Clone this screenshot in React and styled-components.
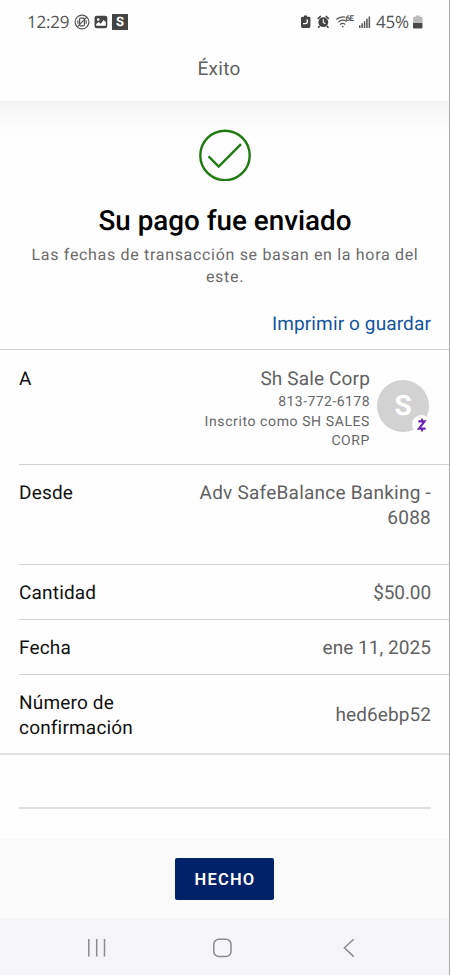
import styled, { createGlobalStyle } from 'styled-components'


const App = () => {
  return (
    <>
      <GlobalStyle />
      <Screen>
        <StatusBar>
          <StatusGroup $gap="4px">
            <StatusText $width="43px">12:29</StatusText>
            <NoVibrateIcon />
            <PictureIcon />
            <AppBadge>S</AppBadge>
          </StatusGroup>
          <StatusGroup $gap="0">
            <StatusIcons />
            <StatusText $width="36px">45%</StatusText>
            <BatteryIcon />
          </StatusGroup>
        </StatusBar>
        <Header>Éxito</Header>

        <Main>
          <Summary>
            <CheckIcon />
            <Title>Su pago fue enviado</Title>
            <Subtitle>Las fechas de transacción se basan en la hora del este.</Subtitle>
          </Summary>
          <PrintLink href="#">Imprimir o guardar</PrintLink>

          <Details>
            <Row $top="17px" $bottom="13.5px">
              <Label>A</Label>
              <Recipient>
                <RecipientText>
                  <Value>Sh Sale Corp</Value>
                  <Small $height="21px" $spacing="0.45px">813-772-6178</Small>
                  <Small $height="19px" $spacing="0.6px">Inscrito como SH SALES CORP</Small>
                </RecipientText>
                <Avatar>
                  S
                  <AvatarBadge>
                    <ZelleIcon />
                  </AvatarBadge>
                </Avatar>
              </Recipient>
            </Row>
            <Row $bottom="34px">
              <Label>Desde</Label>
              <Value $width="250px" $spacing="0.24px">Adv SafeBalance Banking - 6088</Value>
            </Row>
            <Row>
              <Label>Cantidad</Label>
              <Value $spacing="-0.1px">$50.00</Value>
            </Row>
            <Row>
              <Label>Fecha</Label>
              <Value $spacing="0.05px">ene 11, 2025</Value>
            </Row>
            <Row $align="center" $bottom="12.5px" $last>
              <Label>Número de confirmación</Label>
              <Value $spacing="0.1px">hed6ebp52</Value>
            </Row>
          </Details>
          <Divider />
        </Main>

        <Footer>
          <DoneButton>HECHO</DoneButton>
        </Footer>
        <NavBar>
          <NavIcons />
        </NavBar>
      </Screen>
    </>
  )
}
export default App

const NoVibrateIcon = () => (
  <svg width="16" height="16" viewBox="0 0 16 16" fill="none" stroke="#555" strokeWidth="1.2">
    <circle cx="8" cy="8" r="6.9" />
    <rect x="5.6" y="4.2" width="4.8" height="7.6" rx="0.8" />
    <path d="M3.9 6.2v3.6M12.1 6.2v3.6M12.8 3.2L3.2 12.8" />
  </svg>
)

const PictureIcon = () => (
  <svg width="14" height="14" viewBox="0 0 14 14">
    <rect x="0.5" y="0.7" width="12.8" height="12.6" rx="2.4" fill="#444" />
    <circle cx="4.2" cy="4.6" r="1.3" fill="#fff" />
    <path d="M2.2 10.8V9l2.4-2 2.2 1.7L9.6 5l2.2 2v3.8z" fill="#fff" />
  </svg>
)

// battery saver, alarm, wifi 6E and signal bars
const StatusIcons = () => (
  <svg width="76" height="18" viewBox="0 0 76 18">
    <path d="M4 2.6h3v1.2h2a1.4 1.4 0 0 1 1.4 1.4v8.4A1.4 1.4 0 0 1 9 15H2.4A1.4 1.4 0 0 1 1 13.6V5.2A1.4 1.4 0 0 1 2.4 3.8H4z" fill="#444" />
    <path d="M3 10.6h2.4a2 2 0 0 0 2-2V7M8 7.2H6.2" fill="none" stroke="#fff" strokeWidth="1.3" />
    <circle cx="23.3" cy="9.2" r="4.9" fill="#444" />
    <path d="M17.8 5.8l3-2.8M28.8 5.8l-3-2.8M19.7 13l-1.5 1.8M26.9 13l1.5 1.8" stroke="#444" strokeWidth="1.6" />
    <path d="M23.3 6.3v3.1l2.2 1.3" stroke="#fff" strokeWidth="1.1" fill="none" />
    <g fill="none" stroke="#555" strokeWidth="1.2">
      <path d="M36.3 6.5a10.5 10.5 0 0 1 9-2.5" />
      <path d="M38.2 9a7.6 7.6 0 0 1 8.6-.6" />
      <path d="M40 11.4a4.6 4.6 0 0 1 5.3 0" />
    </g>
    <circle cx="42.7" cy="13.6" r="0.9" fill="#555" />
    <text x="45.4" y="8.2" fontFamily="Roboto, sans-serif" fontSize="8" fontWeight="700" fill="#555" textLength="8.6">6E</text>
    <g fill="#555">
      <rect x="59" y="12.2" width="1.5" height="2.8" />
      <rect x="61.4" y="10.3" width="1.5" height="4.7" />
      <rect x="63.8" y="8.2" width="1.5" height="6.8" />
      <rect x="66.2" y="5.7" width="1.5" height="9.3" />
      <rect x="68.6" y="3.5" width="1.5" height="11.5" />
    </g>
  </svg>
)

const BatteryIcon = () => (
  <svg width="12" height="14" viewBox="0 0 12 14">
    <path d="M3.8 0.4h3.9v1.4H9.200a1.3 1.3 0 0 1 1.300 1.300V8H1V3.100A1.300 1.300 0 0 1 2.300 1.800H3.800z" fill="#bbb" />
    <path d="M1 8h9.500v4.200A1.300 1.300 0 0 1 9.200 13.500H2.300A1.300 1.300 0 0 1 1 12.200z" fill="#4a4a4a" />
  </svg>
)

const CheckIcon = () => (
  <svg width="52" height="52" viewBox="0 0 52 52" fill="none" stroke="#1f7a0f" strokeWidth="2.4">
    <circle cx="26" cy="26.4" r="24.7" />
    <path d="M9.6 27.4L19.7 37.6L42 15.2" />
  </svg>
)

const ZelleIcon = () => (
  <svg width="10" height="14" viewBox="0 0 10 14" fill="none" stroke="#6a1fb5" strokeWidth="2.1">
    <path d="M1.4 3.4H7.6L2 10.6H8.6" />
    <path d="M5 0.6v2.8M5 10.6v2.8" strokeWidth="1.8" />
  </svg>
)

const NavIcons = () => (
  <svg width="450" height="57" viewBox="0 0 450 57" fill="none" stroke="#8b8b8d" strokeWidth="1.5">
    <path d="M88.8 21v17.5M96.7 21v17.5M104.5 21v17.5" />
    <rect x="213.8" y="21.2" width="17.2" height="17.2" rx="5" />
    <path d="M353.7 21.2L344.4 29.8L353.7 38.6" />
  </svg>
)

const GlobalStyle = createGlobalStyle`
  * {
    box-sizing: border-box;
  }
  body {
    margin: 0;
    background-color: #fff;
    font-family: Roboto, "Liberation Sans", sans-serif;
    text-rendering: geometricPrecision;
  }
`;

const Screen = styled.div`
  display: flex;
  flex-direction: column;
  width: 450px;
  height: 975px;
  overflow: hidden;
  background-color: #fefefe;
  box-shadow: inset -1px 0 0 #a9a9a9;
`;

const StatusBar = styled.div`
  display: flex;
  justify-content: space-between;
  align-items: center;
  height: 44px;
  padding: 0 26px 0 27px;
`;

const StatusGroup = styled.div`
  display: flex;
  align-items: center;
  gap: ${(props) => props.$gap};
`;

const StatusText = styled.span`
  width: ${(props) => props.$width};
  font-family: "Open Sans", Roboto, sans-serif;
  font-size: 17px;
  line-height: 20px;
  letter-spacing: -0.2px;
  white-space: nowrap;
  color: #555;
`;

const AppBadge = styled.span`
  width: 16px;
  height: 16px;
  background-color: #444;
  color: #fff;
  font-size: 13px;
  font-weight: 700;
  line-height: 17px;
  text-align: center;
`;

const Header = styled.header`
  height: 57px;
  padding-right: 12px;
  color: #616161;
  font-size: 19px;
  line-height: 49px;
  letter-spacing: 0.3px;
  text-align: center;
`;

const Main = styled.main`
  flex: 1;
  margin-right: 1px;
  background-image: linear-gradient(#f5f5f5, #fefefe 33px);
`;

const Summary = styled.section`
  display: flex;
  flex-direction: column;
  align-items: center;
  padding: 28px 19px 0 20px;
`;

const Title = styled.h1`
  margin: 22px 0 0;
  color: #000;
  font-size: 27.8px;
  font-weight: 500;
  line-height: 36px;
`;

const Subtitle = styled.p`
  margin: 5px 0 0;
  color: #6a6a6a;
  font-size: 16px;
  line-height: 22px;
  letter-spacing: 0.68px;
  text-align: center;
`;

const PrintLink = styled.a`
  display: block;
  margin-top: 24px;
  padding-right: 18px;
  color: #13549c;
  font-size: 19px;
  line-height: 24px;
  letter-spacing: 0.13px;
  text-align: right;
  text-decoration: none;
`;

const Details = styled.section`
  margin-top: 13px;
  border-top: 1px solid #d2d2d2;
  border-bottom: 2px solid #e0e0e0;
`;

const Row = styled.div`
  display: flex;
  justify-content: space-between;
  align-items: ${(props) => props.$align || 'flex-start'};
  margin-left: 19px;
  padding: ${(props) => props.$top || '16px'} 18px ${(props) => props.$bottom || '13.5px'} 0;
  border-bottom: ${(props) => (props.$last ? 'none' : '1px solid #d0d0d0')};
`;

const Label = styled.span`
  width: 130px;
  color: #111;
  font-size: 19px;
  line-height: 24.5px;
  letter-spacing: 0.18px;
`;

const Value = styled.span`
  width: ${(props) => props.$width || 'auto'};
  color: #616161;
  font-size: 19px;
  line-height: 24.5px;
  letter-spacing: ${(props) => props.$spacing || '0.15px'};
  text-align: right;
`;

const Recipient = styled.div`
  display: flex;
  gap: 7px;
  margin-right: 2px;
`;

const RecipientText = styled.div`
  display: flex;
  flex-direction: column;
  width: 180px;
`;

const Small = styled.span`
  color: #666;
  font-size: 14px;
  line-height: ${(props) => props.$height};
  letter-spacing: ${(props) => props.$spacing};
  text-align: right;
`;

const Avatar = styled.div`
  position: relative;
  width: 52px;
  height: 52px;
  margin-top: 13px;
  border-radius: 50%;
  background-color: #d2d2d2;
  color: #fff;
  font-size: 28px;
  font-weight: 700;
  line-height: 52px;
  text-align: center;
`;

const AvatarBadge = styled.span`
  position: absolute;
  right: -2px;
  bottom: -2px;
  display: flex;
  justify-content: center;
  align-items: center;
  width: 19px;
  height: 19px;
  border-radius: 50%;
  background-color: #fefefe;
`;

const Divider = styled.hr`
  height: 2px;
  margin: 52px 18px 0 19px;
  border: none;
  background-color: #e0e0e0;
`;

const Footer = styled.footer`
  display: flex;
  justify-content: center;
  align-items: center;
  height: 79px;
  margin-right: 1px;
  background-color: #fafafa;
`;

const DoneButton = styled.button`
  width: 99px;
  height: 42px;
  padding: 2px 0 0 1px;
  border: none;
  border-radius: 2px;
  background-color: #012169;
  color: #fff;
  font-family: inherit;
  font-size: 16.5px;
  font-weight: 600;
  letter-spacing: 1.2px;
`;

const NavBar = styled.nav`
  height: 57px;
  margin-right: 1px;
  overflow: hidden;
  background-color: #f5f5f7;
`;
